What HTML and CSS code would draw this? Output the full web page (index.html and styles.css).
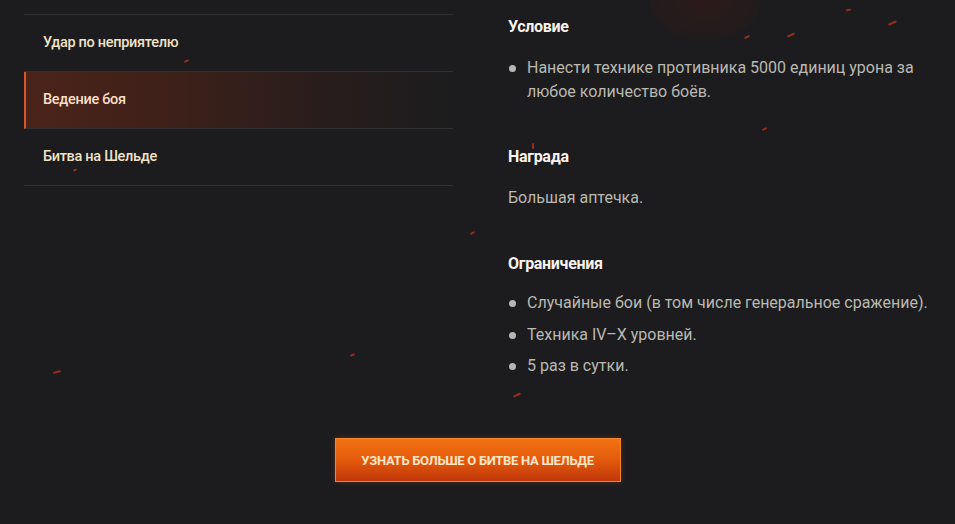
FILE: index.html
```html
<!DOCTYPE html>
<html lang="ru">
<head>
  <meta charset="UTF-8" />
  <meta name="viewport" content="width=device-width, initial-scale=1.0"/>
  <title>Битва на Шельде – задачи</title>
  <link rel="stylesheet" href="styles.css">
</head>
<body>
  <div class="sparks">
    <span class="spark s1"></span>
    <span class="spark s2"></span>
    <span class="spark s3"></span>
    <span class="spark s4"></span>
    <span class="spark s5"></span>
    <span class="spark s6"></span>
    <span class="spark s7"></span>
    <span class="spark s8"></span>
    <span class="spark s9"></span>
    <span class="spark s10"></span>
    <span class="spark s11"></span>
    <span class="spark s12"></span>
    <span class="spark s13"></span>
    <span class="glow"></span>
  </div>

  <main class="mission">
    <ul class="mission-nav">
      <li class="nav-item">Удар по неприятелю</li>
      <li class="nav-item active">Ведение боя</li>
      <li class="nav-item">Битва на Шельде</li>
    </ul>

    <div class="mission-info">
      <h3>Условие</h3>
      <ul class="dots">
        <li>Нанести технике противника 5000 единиц урона за любое количество боёв.</li>
      </ul>

      <h3>Награда</h3>
      <p>Большая аптечка.</p>

      <h3>Ограничения</h3>
      <ul class="dots spaced">
        <li>Случайные бои (в том числе генеральное сражение).</li>
        <li>Техника IV–X уровней.</li>
        <li>5 раз в сутки.</li>
      </ul>
    </div>
  </main>

  <div class="more">
    <button class="more-button">Узнать больше о битве на Шельде</button>
  </div>
</body>
</html>
```

FILE: styles.css
```css
body {
  margin: 0;
  background: #1c1c1e;
  font-family: Roboto, 'Liberation Sans', sans-serif;
  color: #bab9b2;
  position: relative;
  min-height: 524px;
  overflow: hidden;
}
.mission {
  display: grid;
  grid-template-columns: 429px 1fr;
  column-gap: 55px;
  padding: 14px 0 0 24px;
  position: relative;
}
.mission-nav {
  list-style: none;
  margin: 0;
  padding: 0;
  border-top: 1px solid #2f2f31;
}
.nav-item {
  height: 56px;
  line-height: 56px;
  padding-left: 19px;
  border-bottom: 1px solid #303032;
  font-size: 14.5px;
  font-weight: 500;
  letter-spacing: -0.3px;
  color: #f1e2c6;
}
.nav-item.active {
  padding-left: 17px;
  border-left: 2px solid #d4572a;
  background: linear-gradient(to right, #4b2419 0%, #3d2019 35%, #281d1c 70%, #1c1c1e 100%);
  color: #fbdfc6;
}
.mission-info {
  padding-top: 3px;
}
.mission-info h3 {
  margin: 0 0 19px;
  font-size: 16px;
  line-height: 20px;
  font-weight: 700;
  letter-spacing: -0.3px;
  color: #f7f3ec;
}
.mission-info p {
  margin: 0 0 44px;
  font-size: 16px;
  line-height: 24px;
}
.dots {
  list-style: none;
  margin: 0 0 43px;
  padding: 0;
  max-width: 420px;
}
.dots li {
  position: relative;
  padding-left: 19px;
  font-size: 16px;
  line-height: 24px;
}
.dots li::before {
  content: "";
  position: absolute;
  left: 1px;
  top: 9px;
  width: 7px;
  height: 7px;
  border-radius: 50%;
  background: #b7b6b0;
}
.dots.spaced {
  max-width: none;
  margin-top: -2px;
}
.dots.spaced li {
  margin-bottom: 7.5px;
}
.more {
  text-align: center;
  padding-top: 17px;
}
.more-button {
  width: 286px;
  height: 44px;
  border: 1px solid #f2862f;
  background: linear-gradient(to bottom, #f27212 0%, #e35a0c 50%, #c0360a 100%);
  box-shadow: 0 0 6px rgba(240, 100, 20, 0.25);
  color: #fde6c6;
  font-family: Roboto, 'Liberation Sans', sans-serif;
  font-size: 13px;
  font-weight: 700;
  letter-spacing: -0.3px;
  text-transform: uppercase;
  cursor: pointer;
}

/* decorative embers */
.sparks {
  position: absolute;
  inset: 0;
  pointer-events: none;
}
.spark {
  position: absolute;
  width: 7px;
  height: 2px;
  border-radius: 1px;
  background: #b5321a;
  transform: rotate(-25deg);
  opacity: 0.8;
}
.glow {
  position: absolute;
  left: 650px;
  top: -40px;
  width: 110px;
  height: 80px;
  border-radius: 50%;
  background: radial-gradient(ellipse, rgba(110, 20, 10, 0.2), rgba(28, 28, 30, 0));
}
.s1 { left: 184px; top: 60px; width: 5px; }
.s2 { left: 228px; top: 103px; width: 8px; }
.s3 { left: 73px; top: 169px; width: 4px; }
.s4 { left: 787px; top: 34px; width: 8px; }
.s5 { left: 744px; top: 36px; width: 6px; }
.s6 { left: 888px; top: 22px; width: 9px; }
.s7 { left: 846px; top: 9px; width: 5px; transform: rotate(-10deg); }
.s8 { left: 762px; top: 128px; width: 5px; }
.s9 { left: 532px; top: 143px; width: 2px; height: 6px; transform: none; }
.s10 { left: 470px; top: 232px; width: 5px; }
.s11 { left: 350px; top: 354px; width: 5px; }
.s12 { left: 53px; top: 371px; width: 8px; transform: rotate(-15deg); }
.s13 { left: 513px; top: 394px; width: 8px; }
```
